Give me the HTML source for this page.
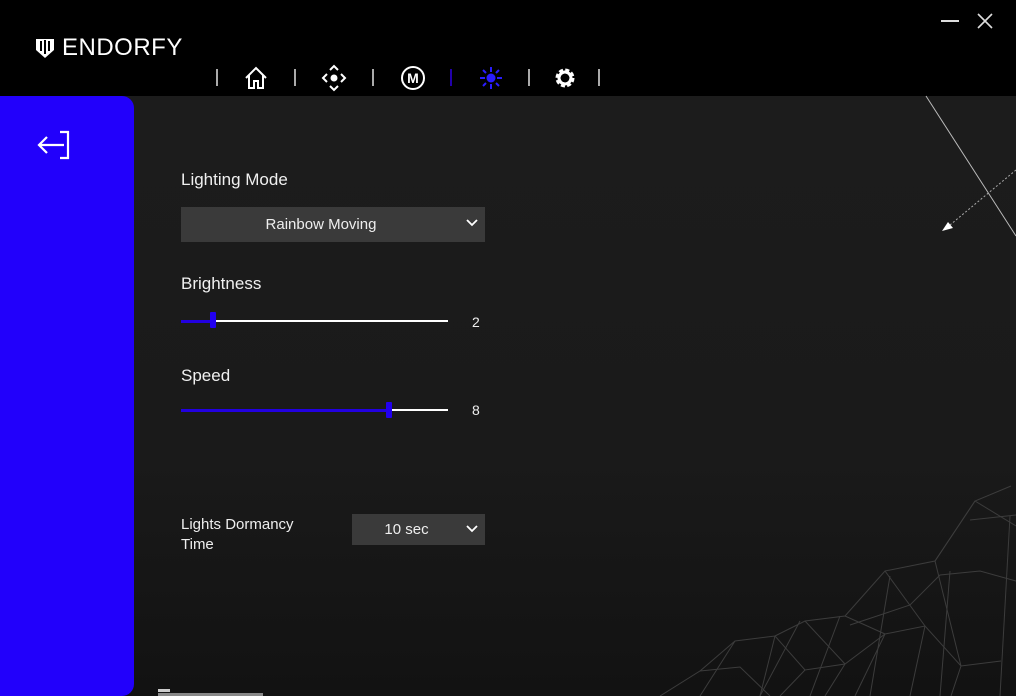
<!DOCTYPE html>
<html><head><meta charset="utf-8"><style>
*{margin:0;padding:0;box-sizing:border-box}
body{width:1016px;height:696px;background:#000;position:relative;overflow:hidden;font-family:"Liberation Sans",sans-serif;color:#fff}
.main{position:absolute;left:0;top:96px;width:1016px;height:600px;background:linear-gradient(180deg,#1c1c1c 0%,#1a1a1a 60%,#121212 100%)}
.side{position:absolute;left:0;top:96px;width:134px;height:600px;background:#2200fb;border-radius:0 12px 12px 0}
.lbl{position:absolute;font-size:17px;color:#f0f0f0}
.dd{position:absolute;background:#3a3a3a;font-size:15px;color:#eee;text-align:center}
.track{position:absolute;height:2px;background:#fff}
.fill{position:absolute;height:3px;background:#2200e0}
.thumb{position:absolute;width:6px;height:16px;background:#2200f0;border-radius:1px}
.val{position:absolute;font-size:14px;color:#eee}
.sep{position:absolute;top:69px;width:2px;height:17px;background:#aaa}
</style></head><body>
<div class="main"></div>
<svg style="position:absolute;left:0;top:0" width="1016" height="696">
<line x1="926" y1="96" x2="1016" y2="236" stroke="#bbb" stroke-width="1"/>
<line x1="1016" y1="170" x2="950" y2="225" stroke="#aaa" stroke-dasharray="2,2"/>
<path d="M942 231l11-3-5-6z" fill="#fff"/>
<g stroke="#3c3c3c" fill="none" stroke-width="1">
<path d="M660 696l40-25 40-4 30 29"/>
<path d="M700 671l35-30 40-5 30 34 40-6 40-30 40-8 36 40 40-5"/>
<path d="M735 641l-35 55M775 636l-15 60M805 670l-25 26M845 664l-20 32M885 634l-30 62M925 626l-15 70M961 666l-10 30"/>
<path d="M775 636l30-15 40-5 40-45 50-10 40-60 36-15"/>
<path d="M805 621l40 43M845 616l40 18M885 571l40 55M935 561l26 105M975 501l-40 60M975 501l41 25"/>
<path d="M760 696l40-75M810 696l30-80M870 696l20-120M940 696l10-125M1000 696l10-180"/>
<path d="M850 625l60-20 30 -30 40-4 36 10M970 520l46-5"/>
</g>
</svg>
<div class="side"></div>
<svg style="position:absolute;left:36px;top:130px" width="36" height="30" viewBox="0 0 36 30"><path d="M24 2h8v26h-8M28 15H3M11 7l-8 8 8 8" stroke="#fff" stroke-width="2.2" fill="none"/></svg>
<svg style="position:absolute;left:33px;top:36px" width="24" height="24" viewBox="0 0 24 24"><path d="M3 3h18v11l-9 8-9-8z" fill="#fff"/><path d="M8 5v10M12 4v14M16 5v10" stroke="#000" stroke-width="2"/></svg>
<div style="position:absolute;left:62px;top:34px;font-size:24px;letter-spacing:0.5px">ENDORFY</div>
<div style="position:absolute;left:941px;top:20px;width:18px;height:1.5px;background:#ddd"></div>
<svg style="position:absolute;left:976px;top:12px" width="18" height="18"><path d="M2 2l14 14M16 2L2 16" stroke="#ddd" stroke-width="1.6"/></svg>
<div class="sep" style="left:216px"></div>
<div class="sep" style="left:294px"></div>
<div class="sep" style="left:372px"></div>
<div class="sep" style="left:450px;background:#2200aa"></div>
<div class="sep" style="left:528px"></div>
<div class="sep" style="left:598px"></div>
<svg style="position:absolute;left:243px;top:65px" width="26" height="26" viewBox="0 0 26 26"><path d="M3 13L13 3l10 10M6 10v13h5v-7h4v7h5V10" stroke="#fff" stroke-width="2" fill="none"/></svg>
<svg style="position:absolute;left:321px;top:64px" width="26" height="28" viewBox="0 0 26 28"><circle cx="13" cy="14" r="3.5" fill="#fff"/><path d="M9 6l4-4 4 4M9 22l4 4 4-4M6 10l-4 4 4 4M20 10l4 4-4 4" stroke="#fff" stroke-width="2" fill="none"/></svg>
<svg style="position:absolute;left:400px;top:65px" width="26" height="26" viewBox="0 0 26 26"><circle cx="13" cy="13" r="11" stroke="#fff" stroke-width="2" fill="none"/><text x="13" y="18" font-size="14" font-weight="bold" fill="#fff" text-anchor="middle" font-family="Liberation Sans">M</text></svg>
<svg style="position:absolute;left:478px;top:65px" width="26" height="26" viewBox="0 0 26 26"><circle cx="13" cy="13" r="4.5" fill="#2a1cff"/><path d="M13 2v5M13 19v5M2 13h5M19 13h5M5 5l3 3M18 18l3 3M21 5l-3 3M5 21l3-3" stroke="#2a1cff" stroke-width="2"/></svg>
<svg style="position:absolute;left:552px;top:65px" width="26" height="26" viewBox="0 0 26 26"><circle cx="13" cy="13" r="7" stroke="#fff" stroke-width="5" fill="none" stroke-dasharray="3.5 2"/><circle cx="13" cy="13" r="6" stroke="#fff" stroke-width="3" fill="none"/></svg>
<div class="lbl" style="left:181px;top:170px">Lighting Mode</div>
<div class="dd" style="left:181px;top:207px;width:304px;height:35px;line-height:35px;padding-right:24px">Rainbow Moving</div>
<svg style="position:absolute;left:465px;top:218px" width="14" height="10"><path d="M2 2l5 5 5-5" stroke="#fff" stroke-width="1.8" fill="none"/></svg>
<div class="lbl" style="left:181px;top:274px">Brightness</div>
<div class="track" style="left:181px;top:320px;width:267px"></div>
<div class="fill" style="left:181px;top:320px;width:32px"></div>
<div class="thumb" style="left:210px;top:312px"></div>
<div class="val" style="left:472px;top:314px">2</div>
<div class="lbl" style="left:181px;top:366px">Speed</div>
<div class="track" style="left:181px;top:409px;width:267px"></div>
<div class="fill" style="left:181px;top:409px;width:208px"></div>
<div class="thumb" style="left:386px;top:402px"></div>
<div class="val" style="left:472px;top:402px">8</div>
<div style="position:absolute;left:181px;top:515px;font-size:15px;line-height:20px;color:#eee">Lights Dormancy<br>Time</div>
<div class="dd" style="left:352px;top:514px;width:133px;height:31px;line-height:31px;padding-right:24px">10 sec</div>
<svg style="position:absolute;left:465px;top:524px" width="14" height="10"><path d="M2 2l5 5 5-5" stroke="#fff" stroke-width="1.8" fill="none"/></svg>
<div style="position:absolute;left:158px;top:689px;width:12px;height:3px;background:#ccc"></div>
<div style="position:absolute;left:158px;top:693px;width:105px;height:3px;background:#888"></div>
</body></html>
